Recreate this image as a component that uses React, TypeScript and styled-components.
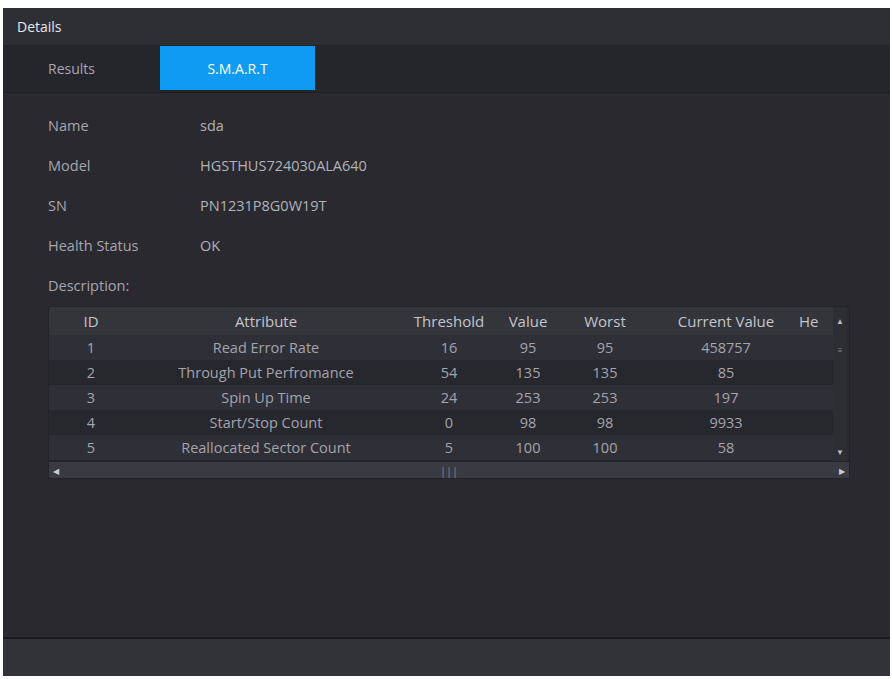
import React from "react";
import styled, { createGlobalStyle } from "styled-components";

const Global = createGlobalStyle`
  html, body { margin: 0; padding: 0; background: #fff; }
  body { font-family: "Open Sans", "Noto Sans", sans-serif; }
`;

const Frame = styled.div`
  width: 892px; height: 679px; box-sizing: border-box;
  padding: 8px 2px 3px 3px; background: #fff;
`;
const Win = styled.div`
  height: 100%; display: flex; flex-direction: column; background: #29292f;
`;
const Title = styled.div`
  height: 37px; flex: none; background: #2e2e35; color: #e6e6ea; font-size: 14px;
  display: flex; align-items: center; padding-left: 14px; border-bottom: 1px solid #222228;
`;
const Tabs = styled.div`
  height: 46px; flex: none; background: #25252c; display: flex; padding-left: 17px;
  border-bottom: 1px solid #1d1d23;
`;
const Tab = styled.div<{ $active?: boolean }>`
  width: ${p => (p.$active ? "155px" : "140px")};
  display: flex; align-items: center; font-size: 14px;
  justify-content: ${p => (p.$active ? "center" : "flex-start")};
  padding-left: ${p => (p.$active ? "0" : "28px")};
  box-sizing: border-box;
  background: ${p => (p.$active ? "#0f9bf2" : "transparent")};
  color: ${p => (p.$active ? "#fff" : "#a8a8b0")};
  margin-bottom: 2px;
`;
const Body = styled.div`
  flex: 1; padding: 12px 40px 0 45px; display: flex; flex-direction: column;
`;
const InfoRow = styled.div`
  height: 40px; display: flex; align-items: center; font-size: 14.5px; color: #a6a6ae;
`;
const Label = styled.div` width: 152px; `;
const Value = styled.div` color: #b2b2ba; `;
const Table = styled.div`
  margin-top: 1px; width: 800px; background: #2a2a31; position: relative;
  border: 1px solid #23232a;
`;
const Grid = styled.div`
  display: grid;
  grid-template-columns: 84px 266px 100px 58px 96px 146px 1fr;
  margin-right: 16px;
`;
const HeadCell = styled.div<{ $left?: boolean }>`
  height: 28px; display: flex; align-items: center;
  justify-content: ${p => (p.$left ? "flex-start" : "center")};
  background: #34343b; color: #c4c4cc; font-size: 15px; white-space: nowrap; overflow: hidden;
`;
const Cell = styled.div<{ $odd: boolean }>`
  height: 25px; display: flex; align-items: center; justify-content: center;
  background: ${p => (p.$odd ? "#2f2f37" : "#27272e")}; color: #a4a4ac; font-size: 14.5px;
  white-space: nowrap;
`;
const VBar = styled.div`
  position: absolute; right: 2px; top: 0; width: 14px; height: 154px;
  background: #2d2d34; display: flex; flex-direction: column; align-items: center;
  color: #bbb; font-size: 8px;
`;
const HBar = styled.div`
  height: 16px; background: #3a3a42; display: flex; align-items: center;
  justify-content: space-between; color: #ccc; font-size: 8px; padding: 0 4px;
  border-top: 2px solid #23232a;
`;
const Footer = styled.div`
  height: 37px; flex: none; background: #323239; border-top: 2px solid #1b1b22;
`;

const rows = [
  ["1", "Read Error Rate", "16", "95", "95", "458757"],
  ["2", "Through Put Perfromance", "54", "135", "135", "85"],
  ["3", "Spin Up Time", "24", "253", "253", "197"],
  ["4", "Start/Stop Count", "0", "98", "98", "9933"],
  ["5", "Reallocated Sector Count", "5", "100", "100", "58"],
];
const heads = ["ID", "Attribute", "Threshold", "Value", "Worst", "Current Value", "He"];

export default function App() {
  return (
    <Frame>
      <Global />
      <Win>
        <Title>Details</Title>
        <Tabs>
          <Tab>Results</Tab>
          <Tab $active>S.M.A.R.T</Tab>
        </Tabs>
        <Body>
          {[["Name", "sda"], ["Model", "HGSTHUS724030ALA640"], ["SN", "PN1231P8G0W19T"], ["Health Status", "OK"], ["Description:", ""]].map(([l, v]) => (
            <InfoRow key={l}><Label>{l}</Label><Value>{v}</Value></InfoRow>
          ))}
          <Table>
            <Grid>
              {heads.map((h, i) => <HeadCell key={h} $left={i === 6}>{h}</HeadCell>)}
              {rows.map((r, i) =>
                [...r, ""].map((c, j) => <Cell key={i + "-" + j} $odd={i % 2 === 0}>{c}</Cell>)
              )}
            </Grid>
            <VBar>
              <span style={{ marginTop: 8 }}>▲</span>
              <span style={{ marginTop: 18, color: "#888" }}>≡</span>
              <span style={{ marginTop: "auto", marginBottom: 4 }}>▼</span>
            </VBar>
            <HBar><span>◀</span><span style={{ color: "#888", fontSize: 11 }}>|||</span><span>▶</span></HBar>
          </Table>
        </Body>
        <Footer />
      </Win>
    </Frame>
  );
}
